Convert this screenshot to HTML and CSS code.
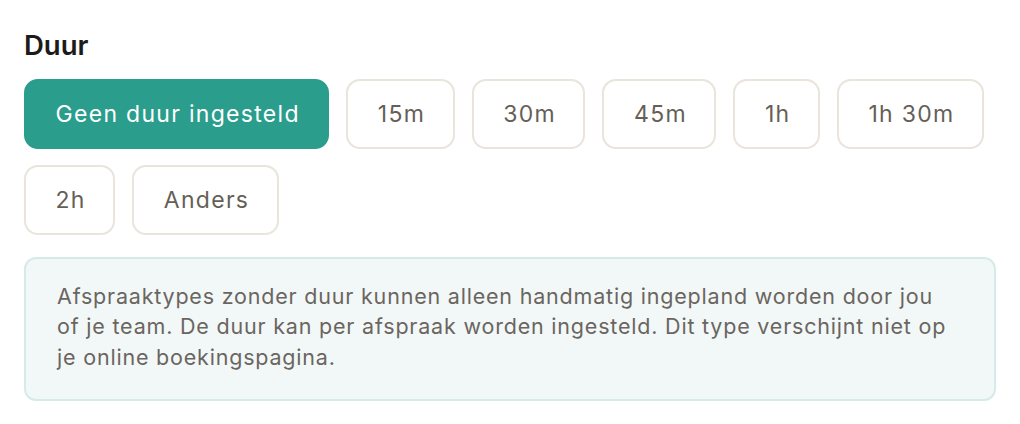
FILE: index.html
```html
<!DOCTYPE html>
<html lang="nl">
<head>
<meta charset="utf-8">
<link rel="stylesheet" href="styles.css">
</head>
<body>
<section class="field">
  <h2 class="label">Duur</h2>
  <div class="options">
    <button class="opt active">Geen duur ingesteld</button>
    <button class="opt">15m</button>
    <button class="opt">30m</button>
    <button class="opt">45m</button>
    <button class="opt">1h</button>
    <button class="opt">1h 30m</button>
    <button class="opt">2h</button>
    <button class="opt">Anders</button>
  </div>
  <div class="info">Afspraaktypes zonder duur kunnen alleen handmatig ingepland worden door jou of je team. De duur kan per afspraak worden ingesteld. Dit type verschijnt niet op je online boekingspagina.</div>
</section>
</body>
</html>
```
FILE: styles.css
```css
* { box-sizing: border-box; }
body {
  margin: 0;
  background: #ffffff;
  font-family: Inter, "Noto Sans", sans-serif;
}
.field {
  padding: 28px 24px 0 24px;
  width: 1020px;
}
.label {
  margin: 0 0 17px 0;
  font-size: 27.5px;
  line-height: 34px;
  font-weight: 600;
  color: #1d1b19;
}
.options {
  display: flex;
  flex-wrap: wrap;
  gap: 16px 17px;
  width: 972px;
}
.opt {
  font-family: inherit;
  font-size: 23px;
  letter-spacing: 1.3px;
  font-weight: 400;
  line-height: 28px;
  height: 70px;
  padding: 0 27.5px 0 29.5px;
  border: 2px solid #e9e4dc;
  border-radius: 14px;
  background: #ffffff;
  color: #665f58;
}
.opt.active {
  background: #2a9d8c;
  border-color: #2a9d8c;
  color: #ffffff;
}
.info {
  margin-top: 22px;
  width: 972px;
  padding: 22px 36px 27px 31px;
  background: #f2f8f8;
  border: 2px solid #d6ebe8;
  border-radius: 12px;
  font-size: 21.5px;
  letter-spacing: 0.8px;
  line-height: 30.4px;
  color: #6b655f;
}
```
